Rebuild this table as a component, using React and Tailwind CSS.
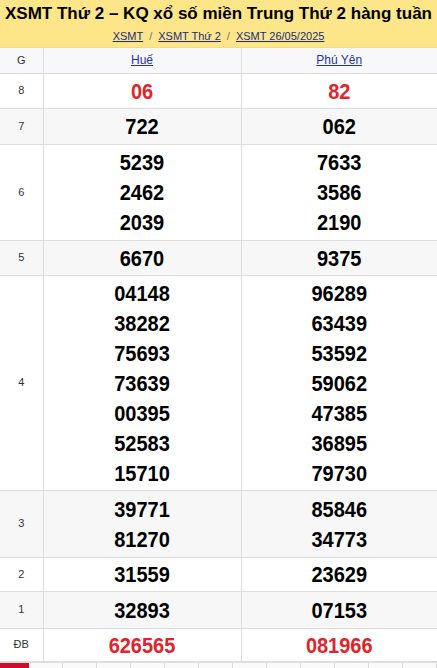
import React from 'react';

const rows = [
  { g: '8', h: 'h-[35px]', bg: 'bg-white', red: true, a: ['06'], b: ['82'] },
  { g: '7', h: 'h-[36px]', bg: 'bg-[#f7f7f7]', a: ['722'], b: ['062'] },
  { g: '6', h: 'h-[96px]', bg: 'bg-white', a: ['5239', '2462', '2039'], b: ['7633', '3586', '2190'] },
  { g: '5', h: 'h-[35px]', bg: 'bg-[#f7f7f7]', a: ['6670'], b: ['9375'] },
  {
    g: '4',
    h: 'h-[215px]',
    bg: 'bg-white',
    a: ['04148', '38282', '75693', '73639', '00395', '52583', '15710'],
    b: ['96289', '63439', '53592', '59062', '47385', '36895', '79730'],
  },
  { g: '3', h: 'h-[67px]', bg: 'bg-[#f7f7f7]', a: ['39771', '81270'], b: ['85846', '34773'] },
  { g: '2', h: 'h-[34px]', bg: 'bg-white', a: ['31559'], b: ['23629'] },
  { g: '1', h: 'h-[37px]', bg: 'bg-[#f7f7f7]', a: ['32893'], b: ['07153'] },
  { g: 'ĐB', h: 'h-[33px]', bg: 'bg-white', red: true, a: ['626565'], b: ['081966'] },
];

const tabs = ['T2', 'T3', 'T4', 'T5', 'T6', 'T7', 'CN', '', '', '', '', '', ''];

function Nums({ list, red }) {
  return (
    <div className="flex flex-col items-center">
      {list.map((n, i) => (
        <div
          key={i}
          className={`h-[30px] leading-[30px] text-[20px] font-bold scale-y-[1.12] ${red ? 'text-[#e1232b]' : 'text-black'}`}
        >
          {n}
        </div>
      ))}
    </div>
  );
}

export default function App() {
  return (
    <div className="w-[437px] bg-white font-['Liberation_Sans',Arial,sans-serif]">
      {/* tiêu đề */}
      <div className="h-[48px] bg-[#fde68a] border-b border-[#f3dc84] text-center pt-[3px]">
        <h1 className="text-[17px] font-bold text-black leading-[22px] whitespace-nowrap">
          XSMT Thứ 2 – KQ xổ số miền Trung Thứ 2 hàng tuần
        </h1>
        <div className="text-[11px] leading-[18px] mt-[2px] text-[#777]">
          <a className="underline text-[#1c2a7a]">XSMT</a>
          <span className="mx-[6px]">/</span>
          <a className="underline text-[#1c2a7a]">XSMT Thứ 2</a>
          <span className="mx-[6px]">/</span>
          <a className="underline text-[#1c2a7a]">XSMT 26/05/2025</a>
        </div>
      </div>

      <table className="w-[437px] border-collapse table-fixed">
        <colgroup>
          <col className="w-[43px]" />
          <col className="w-[198px]" />
          <col className="w-[196px]" />
        </colgroup>
        <thead>
          <tr className="h-[25px] bg-[#f8f8fb]">
            <th className="border-b border-r border-[#dddddd] text-[11px] font-normal text-[#333]">G</th>
            <th className="border-b border-r border-[#dddddd] text-[12px] font-normal">
              <a className="underline text-[#2232a8]">Huế</a>
            </th>
            <th className="border-b border-[#dddddd] text-[12px] font-normal">
              <a className="underline text-[#2232a8]">Phú Yên</a>
            </th>
          </tr>
        </thead>
        <tbody>
          {rows.map((r) => (
            <tr key={r.g} className={`${r.h} ${r.bg}`}>
              <td className="border-b border-r border-[#dddddd] text-center text-[11px] text-[#333]">{r.g}</td>
              <td className="border-b border-r border-[#dddddd] p-0">
                <Nums list={r.a} red={r.red} />
              </td>
              <td className="border-b border-[#dddddd] p-0">
                <Nums list={r.b} red={r.red} />
              </td>
            </tr>
          ))}
        </tbody>
      </table>

      {/* tab ngày */}
      <div className="flex h-[24px] border-t border-[#dddddd]">
        <div className="w-[29px] shrink-0 bg-[#c8102e] text-white text-[11px] text-center pt-[3px]">T2</div>
        {tabs.slice(1).map((t, i) => (
          <div
            key={i}
            className="w-[34px] shrink-0 border-r border-[#dddddd] bg-[#fafafa] text-[11px] text-[#333] text-center pt-[3px]"
          >
            {t}
          </div>
        ))}
      </div>
    </div>
  );
}
